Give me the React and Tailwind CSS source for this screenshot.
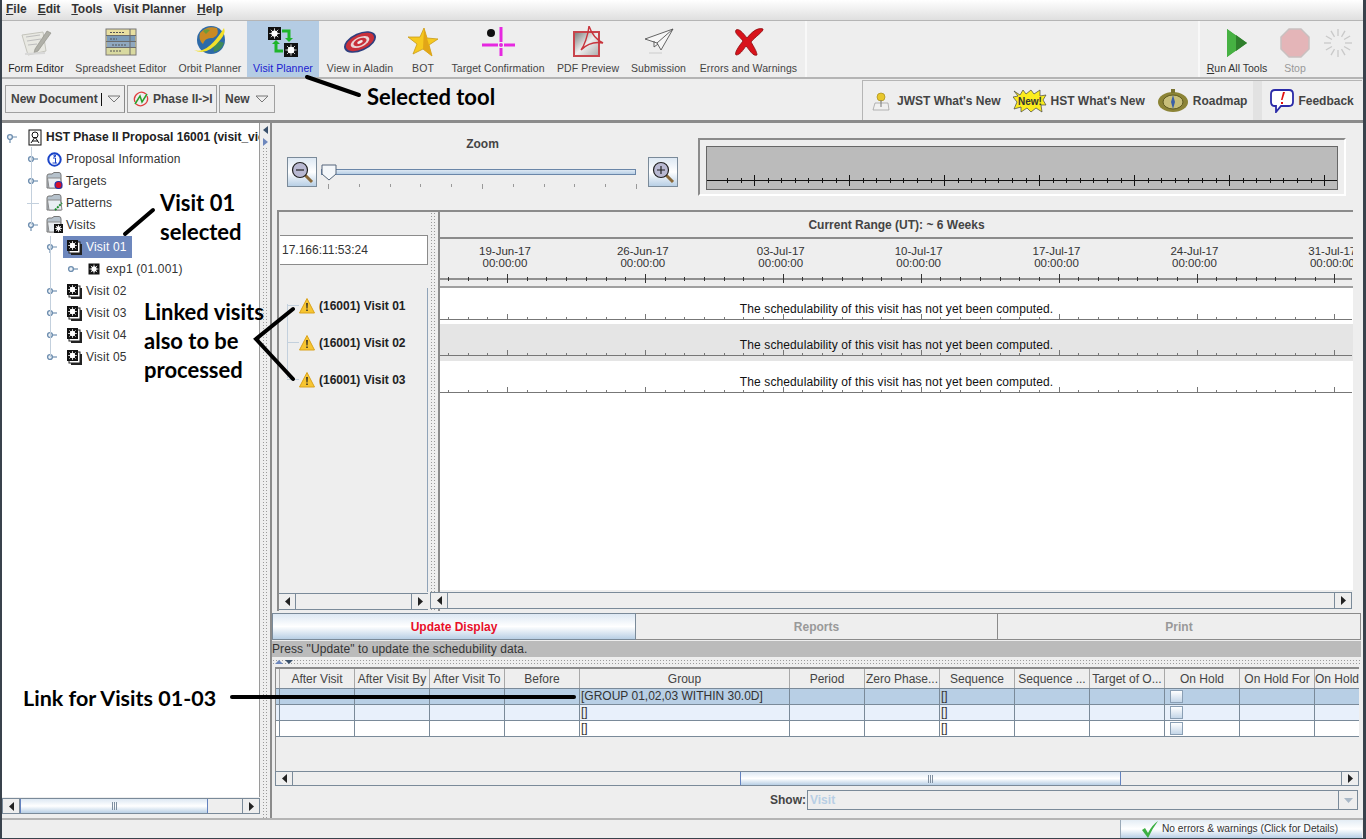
import React from 'react';

const range = (n) => Array.from({ length: n }, (_, i) => i);

// ---- icons, drawn small like the Java toolbar bitmaps ----
const FormEditorIcon = () => (
  <svg width="34" height="30" viewBox="0 0 34 30">
    <path d="M3 8 L24 5 L27 24 L9 28 Z" fill="#e8e8e2" stroke="#c4c4bc" />
    <path d="M7 10 L21 8 M8 14 L22 12 M9 18 L18 17" stroke="#bdbdbd" />
    <path d="M28 4 L32 6 L19 24 L15 26 L16 22 Z" fill="#b0b0a8" stroke="#8a8a82" strokeWidth="0.6" />
    <path d="M6 27 L26 26" stroke="#d8d8d8" strokeWidth="2" />
  </svg>
);
const SheetIcon = () => (
  <svg width="32" height="28" viewBox="0 0 32 28">
    <rect x="1" y="1" width="30" height="26" fill="#e8dfa0" stroke="#777" />
    <rect x="2" y="8" width="28" height="6" fill="#7c9cb8" />
    <rect x="2" y="20" width="28" height="6" fill="#d8d9a0" />
    <rect x="2" y="14" width="28" height="6" fill="#8fa8c0" />
    <path d="M1 7.5 H31 M1 13.5 H31 M1 19.5 H31 M25 1 V27" stroke="#6b6b6b" />
    <path d="M5 4.5 H20 M5 11 H12 M7 17 H22 M5 23 H17" stroke="#555" strokeDasharray="2 1" />
  </svg>
);
const OrbitIcon = () => (
  <svg width="34" height="34" viewBox="0 0 34 34">
    <circle cx="18" cy="15" r="14" fill="#2d6aa8" />
    <path d="M7 8 Q14 0 24 3 Q27 10 20 13 Q12 12 10 19 Q5 15 7 8 Z" fill="#c98a24" />
    <path d="M20 18 Q27 15 31 18 Q28 26 21 27 Z" fill="#3f8a5a" />
    <path d="M10 6 Q13 3 17 5 L13 9 Z" fill="#6c9a3a" />
    <path d="M1 25 Q14 30 31 3 Q33 8 28 14 Q14 32 1 25 Z" fill="#f3e02a" />
  </svg>
);
// black tile with a white burst, the visit / exposure mark
const Square = ({ x, y, s = 11 }) => {
  const cx = x + s / 2;
  const cy = y + s / 2;
  const r = s * 0.4;
  const d = r * 0.72;
  return (
    <g>
      <rect x={x} y={y} width={s} height={s} fill="#111" />
      <circle cx={cx} cy={cy} r={s * 0.24} fill="#fff" />
      <path
        d={`M${cx} ${cy - r} V${cy + r} M${cx - r} ${cy} H${cx + r} M${cx - d} ${cy - d} L${cx + d} ${cy + d} M${cx - d} ${cy + d} L${cx + d} ${cy - d}`}
        stroke="#fff"
        strokeWidth="0.8"
      />
    </g>
  );
};
const VisitPlannerIcon = () => (
  <svg width="32" height="32" viewBox="0 0 32 32">
    <Square x={1} y={1} s={13} />
    <Square x={17} y={17} s={14} />
    <path d="M15 5 H22 V13" fill="none" stroke="#1fb52b" strokeWidth="3" />
    <path d="M18 12 H26 L22 16 Z" fill="#1fb52b" />
    <path d="M16 25 H9 V17" fill="none" stroke="#1fb52b" strokeWidth="3" />
    <path d="M5 18 H13 L9 14 Z" fill="#1fb52b" />
  </svg>
);
const AladinIcon = () => (
  <svg width="34" height="26" viewBox="0 0 34 26">
    <g transform="rotate(-24 17 13)">
      <ellipse cx="17" cy="13" rx="17" ry="9" fill="#2f3f7f" />
      <ellipse cx="17" cy="13" rx="15" ry="7.5" fill="#c9303a" />
      <ellipse cx="17" cy="13" rx="10" ry="5" fill="#e9d6d6" />
      <ellipse cx="17" cy="13" rx="7" ry="3.5" fill="#c9303a" />
      <ellipse cx="17" cy="13" rx="3" ry="1.5" fill="#eee" />
    </g>
  </svg>
);
const StarIcon = () => (
  <svg width="32" height="30" viewBox="0 0 32 30">
    <path d="M17 1 L20 11 L31 12 L22 18 L25 29 L16 22 L6 27 L10 17 L1 10 L13 10 Z" fill="#f6c91f" stroke="#c99a18" strokeWidth="0.8" />
    <path d="M17 1 L16 22 L25 29 L22 18 Z" fill="#e2a617" />
  </svg>
);
const TargetIcon = () => (
  <svg width="33" height="30" viewBox="0 0 33 30">
    <circle cx="9" cy="6" r="4" fill="#111" />
    <path d="M19 0 V15 M19 21 V29 M0 18 H16 M22 18 H33" stroke="#e628e0" strokeWidth="3" />
    <circle cx="19" cy="18" r="2" fill="#e628e0" />
  </svg>
);
const PdfIcon = () => (
  <svg width="32" height="32" viewBox="0 0 32 32">
    <defs>
      <linearGradient id="pdfg" x1="0" y1="0" x2="1" y2="1">
        <stop offset="0" stopColor="#777" />
        <stop offset="0.5" stopColor="#eee" />
        <stop offset="1" stopColor="#aaa" />
      </linearGradient>
    </defs>
    <rect x="2" y="6" width="25" height="24" fill="url(#pdfg)" stroke="#c8444c" strokeWidth="2" />
    <path d="M17 0 C16 10 12 20 9 24 C13 20 20 15 31 17 C25 14 20 9 17 0 Z" fill="none" stroke="#c8343c" strokeWidth="1.4" />
  </svg>
);
const PlaneIcon = () => (
  <svg width="30" height="28" viewBox="0 0 30 28">
    <path d="M1 11 L29 1 L17 22 L13 15 Z M13 15 L29 1 M10 13 L10 19 L14 16" fill="#f6f6f6" stroke="#555" strokeWidth="0.9" />
    <path d="M5 25 H18" stroke="#ddd" strokeWidth="2" />
  </svg>
);
const RedXIcon = () => (
  <svg width="32" height="30" viewBox="0 0 32 30">
    <path d="M3 3 C6 1 10 6 14 11 C18 6 24 0 30 2 C31 4 22 10 18 15 C21 20 24 25 24 28 C20 30 16 22 13 19 C10 23 7 28 3 28 C1 26 6 19 10 14 C6 9 1 6 3 3 Z" fill="#d8131b" stroke="#8a0c10" strokeWidth="0.8" />
  </svg>
);
const RunIcon = () => (
  <svg width="22" height="30" viewBox="0 0 22 30">
    <path d="M1 1 L21 15 L1 29 Z" fill="#3ea33a" />
    <path d="M10 7 L21 15 L10 23 Z" fill="#2f7f2c" />
    <path d="M1 1 L10 8 L10 22 L1 29 Z" fill="#46b142" />
  </svg>
);
const StopIcon = () => (
  <svg width="30" height="30" viewBox="0 0 30 30">
    <path d="M9 1 H21 L29 9 V21 L21 29 H9 L1 21 V9 Z" fill="#e4b5b8" stroke="#c9c0c0" strokeWidth="1.5" />
  </svg>
);
const Spinner = () => (
  <svg width="32" height="32" viewBox="0 0 32 32">
    {range(12).map((i) => (
      <line key={i} x1="16" y1="2" x2="16" y2="9" stroke="#c9c9c9" strokeWidth="1.3" transform={`rotate(${i * 30} 16 16)`} />
    ))}
  </svg>
);
const FlagIcon = () => (
  <svg width="18" height="20" viewBox="0 0 18 20">
    <path d="M1 19 L3 12 H16 L17 19 Z" fill="#f0f0f0" stroke="#999" strokeWidth="0.7" />
    <circle cx="9" cy="6" r="4" fill="#e8c72c" stroke="#a68c1c" strokeWidth="0.7" />
    <path d="M9 9 V16" stroke="#777" />
  </svg>
);
const NewBurst = () => (
  <svg width="34" height="24" viewBox="0 0 34 24">
    <path d="M1 2 L7 6 L10 1 L13 5 L18 1 L21 5 L27 1 L27 7 L33 6 L30 11 L33 16 L28 16 L29 23 L23 19 L18 23 L14 19 L8 23 L8 18 L1 20 L4 13 L0 8 L5 7 Z" fill="#fbec1e" stroke="#444" strokeWidth="0.7" />
    <text x="17" y="15.5" textAnchor="middle" fontSize="10" fontFamily="Liberation Sans, sans-serif" fill="#333">New!</text>
  </svg>
);
const CompassIcon = () => (
  <svg width="30" height="24" viewBox="0 0 30 24">
    <ellipse cx="15" cy="13" rx="15" ry="10" fill="#8c8436" />
    <ellipse cx="15" cy="13" rx="10" ry="7" fill="#c8bf7a" stroke="#5f5a20" />
    <rect x="13" y="0" width="4" height="4" fill="#7b7430" />
    <path d="M15 6 L17 13 L15 20 L13 13 Z" fill="#3a5fa8" />
  </svg>
);
const FeedbackIcon = () => (
  <svg width="24" height="24" viewBox="0 0 24 24">
    <path d="M5 1 H19 Q23 1 23 5 V13 Q23 17 19 17 H11 L6 23 V17 H5 Q1 17 1 13 V5 Q1 1 5 1 Z" fill="#fff" stroke="#2a2aa8" strokeWidth="1.8" />
    <path d="M13 3 L15 3 L12.5 11 L11 11 Z M11 13 H13 V15 H11 Z" fill="#e01010" />
  </svg>
);
const VisitIcon = () => (
  <svg width="17" height="17" viewBox="0 0 17 17">
    <rect x="5" y="5" width="11" height="11" fill="#222" />
    <rect x="3" y="3" width="11" height="11" fill="#fff" stroke="#222" />
    <Square x={1} y={1} s={11} />
  </svg>
);
const ExpIcon = () => (
  <svg width="12" height="12" viewBox="0 0 12 12">
    <Square x={0.5} y={0.5} s={11} />
  </svg>
);
const RootIcon = () => (
  <svg width="14" height="17" viewBox="0 0 14 17">
    <rect x="1" y="1" width="12" height="15" fill="#fff" stroke="#111" />
    <circle cx="7" cy="6" r="3" fill="none" stroke="#111" />
    <path d="M3 14 L7 8 L11 14 M4 12 H10" stroke="#111" fill="none" />
  </svg>
);
const InfoIcon = () => (
  <svg width="18" height="15" viewBox="0 0 18 15">
    <circle cx="8.5" cy="7.5" r="6.2" fill="#fff" stroke="#1a44c8" strokeWidth="2" />
    <path d="M7 6 H9.5 V11 H11 M6.5 11 H10 M8 3 H9.5 V4.5 H8 Z" stroke="#1a44c8" fill="none" />
  </svg>
);
const FolderIcon = ({ badge }) => (
  <svg width="18" height="18" viewBox="0 0 18 18">
    <path d="M1 16 V4 Q1 2 3 2 H6 L8 0.5 H13 Q15 0.5 15 3 V16 Z" fill="#b6c2cc" stroke="#777" />
    <path d="M3 16 L1.5 6 H14.5 L16 16 Z" fill="#e9eef2" stroke="#8a8a8a" />
    {badge === 'target' && <circle cx="12.5" cy="13" r="3.5" fill="#d8102a" stroke="#2030a8" strokeWidth="1.2" />}
    {badge === 'pattern' && <path d="M9 16 L16 9" stroke="#1c8a2c" strokeWidth="2" strokeDasharray="2 1" />}
    {badge === 'visit' && <Square x={8} y={8} s={9} />}
  </svg>
);
const WarnIcon = () => (
  <svg width="16" height="16" viewBox="0 0 16 16">
    <path d="M8 0.5 L15.5 15 H0.5 Z" fill="#f7c531" stroke="#d9a21c" strokeLinejoin="round" />
    <path d="M7.2 5 H8.8 L8.5 10.5 H7.5 Z M7.3 11.5 H8.7 V13 H7.3 Z" fill="#222" />
  </svg>
);
const Magnifier = ({ plus }) => (
  <svg width="24" height="24" viewBox="0 0 24 24">
    <path d="M15 15 L22 22" stroke="#8a6a3a" strokeWidth="3" />
    <circle cx="10" cy="10" r="7.5" fill="#b9b9d2" stroke="#222" strokeWidth="1.2" />
    <path d={plus ? 'M6 10 H14 M10 6 V14' : 'M6 10 H14'} stroke="#222" strokeWidth="1.2" />
  </svg>
);
const CheckIcon = () => (
  <svg width="18" height="18" viewBox="0 0 18 18">
    <path d="M1 10 L4 8 L7 13 Q11 5 17 1 Q11 9 7 18 Z" fill="#3cb043" />
  </svg>
);
const CycleIcon = () => (
  <svg width="16" height="16" viewBox="0 0 16 16">
    <path d="M2 11 A7 7 0 0 1 13 3" fill="none" stroke="#e04040" strokeWidth="1.3" />
    <path d="M14 5 A7 7 0 0 1 3 13" fill="none" stroke="#e04040" strokeWidth="1.3" />
    <path d="M2 13 L7 5 L9 11 L14 3" fill="none" stroke="#2aa02a" strokeWidth="1.5" />
  </svg>
);
const DownTri = ({ color = '#777' }) => (
  <svg width="14" height="8" viewBox="0 0 14 8">
    <path d="M1 1 H13 L7 7 Z" fill="none" stroke={color} />
  </svg>
);

// ---- swing bits ----
const ArrowBtn = ({ dir, className = 'w-[16px]' }) => (
  <div className={`${className} shrink-0 h-full flex items-center justify-center bg-[#eeeeee]`}>
    <svg width="5" height="9" viewBox="0 0 5 9">
      <path d={dir === 'left' ? 'M5 0 V9 L0 4.5 Z' : 'M0 0 V9 L5 4.5 Z'} fill="#222" />
    </svg>
  </div>
);

const Grip = () => (
  <div className="flex gap-[1px] h-[8px]">
    <div className="w-px bg-[#7f8fa0]" />
    <div className="w-px bg-[#7f8fa0]" />
    <div className="w-px bg-[#7f8fa0]" />
  </div>
);

// thumb = [before, width], null when the bar is empty
const HScroll = ({ thumb, className = '' }) => (
  <div className={`flex items-stretch border border-[#7a8a99] bg-[#eeeeee] ${className}`}>
    <ArrowBtn dir="left" />
    <div className="flex-1 flex border-x border-[#7a8a99] min-w-0">
      {thumb && <div style={{ width: thumb[0] }} className="shrink-0" />}
      {thumb && (
        <div style={{ width: thumb[1] }} className="shrink-0 border-x border-[#6382bf] bg-linear-to-b from-[#dde8f3] via-white to-[#b8cfe5] flex items-center justify-center">
          <Grip />
        </div>
      )}
    </div>
    <ArrowBtn dir="right" />
  </div>
);

const Handle = ({ open }) => (
  <svg width="12" height="12" viewBox="0 0 12 12" className="shrink-0">
    <circle cx="4" cy="6" r="2.4" fill="#eef3f8" stroke="#6f8fb0" strokeWidth="1.4" />
    <path d={open ? 'M4 8.5 V12 M6.5 6 H11' : 'M6.5 6 H11'} stroke="#6f8fb0" strokeWidth="1.2" />
  </svg>
);

const TreeRow = ({ pad, icon, label, bold, selected, noHandle, open, inner = 'ml-[7px] gap-[2px]' }) => (
  <div className={`h-[22px] flex items-center ${pad}`}>
    <div className="w-[12px] shrink-0 flex items-center">
      {noHandle ? <div className="w-[12px] h-px bg-[#c3d0dd]" /> : <Handle open={open} />}
    </div>
    {selected ? (
      <div className="ml-[5px] h-[22px] w-[69px] flex items-center gap-[3px] bg-[#6d87bd] pl-[3px]">
        {icon}
        <span className="text-white">{label}</span>
      </div>
    ) : (
      <div className={`flex items-center ${inner} whitespace-nowrap`}>
        {icon}
        <span className={bold ? 'font-bold text-[#222] tracking-normal' : ''}>{label}</span>
      </div>
    )}
  </div>
);

const tools = [
  { w: 'w-[66px]', icon: <FormEditorIcon />, label: 'Form Editor', dark: true },
  { w: 'w-[104px]', icon: <SheetIcon />, label: 'Spreadsheet Editor' },
  { w: 'w-[74px]', icon: <OrbitIcon />, label: 'Orbit Planner' },
  { w: 'w-[72px]', icon: <VisitPlannerIcon />, label: 'Visit Planner', active: true },
  { w: 'w-[82px]', icon: <AladinIcon />, label: 'View in Aladin' },
  { w: 'w-[44px]', icon: <StarIcon />, label: 'BOT' },
  { w: 'w-[106px]', icon: <TargetIcon />, label: 'Target Confirmation' },
  { w: 'w-[74px]', icon: <PdfIcon />, label: 'PDF Preview' },
  { w: 'w-[67px]', icon: <PlaneIcon />, label: 'Submission' },
  { w: 'w-[113px]', icon: <RedXIcon />, label: 'Errors and Warnings' },
];

const ToolButton = ({ w, icon, label, active, dark }) => (
  <div className={`${w} shrink-0 flex flex-col items-center ${active ? 'bg-[#b4cce4] text-[#1a1ad0]' : dark ? 'text-[#222]' : 'text-[#444]'}`}>
    <div className="h-[40px] pt-[2px] flex items-center justify-center">{icon}</div>
    <div className="text-[10.5px] tracking-[0.08px] leading-[13px] mt-[1px] whitespace-nowrap">{label}</div>
  </div>
);

const dates = ['19-Jun-17', '26-Jun-17', '03-Jul-17', '10-Jul-17', '17-Jul-17', '24-Jul-17', '31-Jul-17'];

// ticks of the time axis, 7 per week, first major at x=67 of the strip
const AxisTicks = ({ height, y, long = 5, short = 2, line = '#333' }) => (
  <svg width="912" height={height} className="block">
    <line x1="0" y1={y} x2="912" y2={y} stroke={line} />
    {range(48).map((i) => {
      const x = Math.round(7.9 + i * 19.7) + 0.5;
      const major = (i - 3) % 7 === 0;
      return <line key={i} x1={x} x2={x} y1={y - (major ? long : short)} y2={major ? y + long - 1 : y + short} stroke={line} />;
    })}
  </svg>
);

const ScheduleRow = ({ shaded, height }) => (
  <div className={`${height} ${shaded ? 'bg-[#e5e5e5]' : 'bg-white'}`}>
    <div className="pt-[15px] h-[26px] text-center text-[12px] tracking-[0.11px] leading-[12px] text-[#111] whitespace-nowrap">
      The schedulability of this visit has not yet been computed.
    </div>
    <svg width="912" height="6" className="block">
      <line x1="0" y1="5.5" x2="912" y2="5.5" stroke="#777" />
      {range(48).map((i) => {
        const x = Math.round(7.9 + i * 19.7) + 0.5;
        const major = (i - 3) % 7 === 0;
        return <line key={i} x1={x} x2={x} y1={major ? 0 : 3} y2="5" stroke="#777" />;
      })}
    </svg>
  </div>
);

const columns = ['', 'After Visit', 'After Visit By', 'After Visit To', 'Before', 'Group', 'Period', 'Zero Phase...', 'Sequence', 'Sequence ...', 'Target of O...', 'On Hold', 'On Hold For', 'On Hold'];
const gridCols = 'grid grid-cols-[4px_75px_75px_75px_75px_210px_75px_75px_75px_75px_75px_75px_75px_44px]';

const TableRow = ({ group, bg }) => (
  <div className={`${gridCols} h-[16px] border-b border-[#7a8a99] ${bg} text-[12px] leading-[15px] text-[#333]`}>
    {columns.map((c, i) => (
      <div key={i} className="border-r border-[#7a8a99] overflow-hidden whitespace-nowrap pl-[1px] last:border-r-0 flex items-center">
        {i === 5 && group}
        {i === 8 && '[]'}
        {i === 11 && <div className="ml-[4px] w-[13px] h-[13px] border border-[#8a9fb4] bg-linear-to-b from-white to-[#c4d6e8]" />}
      </div>
    ))}
  </div>
);

const Dots = ({ className }) => (
  <div className={`bg-[radial-gradient(#9a9a9a_0.6px,transparent_0.7px)] bg-size-[3px_3px] ${className}`} />
);

export default function App() {
  return (
    <div className="relative w-[1366px] h-[839px] overflow-hidden bg-[#eeeeee] text-[#333] font-['Liberation_Sans',Arial,sans-serif] border-l-2 border-r-[3px] border-b border-[#39424c]">
      {/* menu */}
      <div className="h-[21px] flex items-center gap-[11px] pl-[4px] pb-[2px] text-[12px] font-bold text-[#333] bg-linear-to-b from-white to-[#dfdfdf] border-b border-[#b5b5b5]">
        <span><u>F</u>ile</span>
        <span><u>E</u>dit</span>
        <span><u>T</u>ools</span>
        <span>Visit Planner</span>
        <span><u>H</u>elp</span>
      </div>

      {/* tool bar */}
      <div className="h-[58px] flex justify-between border-b-2 border-[#b4b4b4]">
        <div className="flex pl-[1px] border-r-2 border-[#f8f8f8]">
          {tools.map((t) => (
            <ToolButton key={t.label} {...t} />
          ))}
        </div>
        <div className="flex w-[165px] border-l-2 border-[#f8f8f8] text-[10.5px]">
          <div className="w-[74px] flex flex-col items-center text-[#333]">
            <div className="h-[40px] flex items-center pt-[3px]"><RunIcon /></div>
            <span className="mt-[1px] leading-[13px]"><u>R</u>un All Tools</span>
          </div>
          <div className="w-[42px] flex flex-col items-center text-[#999]">
            <div className="h-[40px] flex items-center pt-[3px]"><StopIcon /></div>
            <span className="mt-[1px] leading-[13px]">Stop</span>
          </div>
          <div className="w-[44px] h-[40px] flex items-center justify-center pt-[3px]"><Spinner /></div>
        </div>
      </div>

      {/* second bar */}
      <div className="h-[44px] flex justify-between items-start border-b-[3px] border-[#8b8b8b] pr-[1px]">
        <div className="flex gap-[2px] pl-[3px] pt-[6px] text-[12px] font-bold text-[#444]">
          <div className="w-[120px] h-[28px] border border-[#a0a0a0] border-r-[#8a8a8a] flex items-center pl-[5px]">
            <span className="whitespace-nowrap">New Document</span>
            <div className="ml-[3px] w-px h-[13px] bg-[#111]" />
            <div className="ml-[5px]"><DownTri /></div>
          </div>
          <div className="w-[90px] h-[28px] border border-[#a0a0a0] flex items-center pl-[5px] gap-[4px]">
            <CycleIcon />
            <span className="whitespace-nowrap">Phase II-&gt;I</span>
          </div>
          <div className="w-[56px] h-[28px] border border-[#a0a0a0] flex items-center pl-[5px] gap-[5px]">
            <span>New</span>
            <DownTri />
          </div>
        </div>
        <div className="w-[500px] h-[40px] mt-[1px] border-l border-t border-[#b5b5b5] flex items-center text-[12px] font-bold text-[#444] whitespace-nowrap">
          <div className="ml-[9px]"><FlagIcon /></div>
          <span className="ml-[7px]">JWST What's New</span>
          <div className="ml-[12px]"><NewBurst /></div>
          <span className="ml-[4px]">HST What's New</span>
          <div className="ml-[13px]"><CompassIcon /></div>
          <span className="ml-[5px]">Roadmap</span>
          <div className="ml-[6px] w-[9px] h-full bg-[#e2e2e2]" />
          <div className="ml-[8px]"><FeedbackIcon /></div>
          <span className="ml-[4px]">Feedback</span>
        </div>
      </div>

      {/* main area */}
      <div className="h-[695px] flex">
        {/* tree */}
        <div className="w-[258px] shrink-0 flex flex-col">
          <div className="relative h-[674px] bg-white border-r border-[#9a9a9a] pt-[3px] text-[12px] tracking-[0.2px] text-[#333] overflow-hidden">
            <div className="absolute left-[29px] top-[24px] w-px h-[78px] bg-[#c3d0dd]" />
            <div className="absolute left-[48px] top-[113px] w-px h-[121px] bg-[#c3d0dd]" />
            <TreeRow pad="pl-[4px]" open inner="ml-[10px] gap-[4px]" bold icon={<RootIcon />} label="HST Phase II Proposal 16001 (visit_vicinity)" />
            <TreeRow pad="pl-[25px]" icon={<InfoIcon />} label="Proposal Information" />
            <TreeRow pad="pl-[25px]" icon={<FolderIcon badge="target" />} label="Targets" />
            <TreeRow pad="pl-[25px]" noHandle icon={<FolderIcon badge="pattern" />} label="Patterns" />
            <TreeRow pad="pl-[25px]" open icon={<FolderIcon badge="visit" />} label="Visits" />
            <TreeRow pad="pl-[44px]" open selected icon={<VisitIcon />} label="Visit 01" />
            <TreeRow pad="pl-[65px]" inner="ml-[9px] gap-[6px]" icon={<ExpIcon />} label="exp1 (01.001)" />
            <TreeRow pad="pl-[44px]" inner="ml-[8px] gap-[3px]" icon={<VisitIcon />} label="Visit 02" />
            <TreeRow pad="pl-[44px]" inner="ml-[8px] gap-[3px]" icon={<VisitIcon />} label="Visit 03" />
            <TreeRow pad="pl-[44px]" inner="ml-[8px] gap-[3px]" icon={<VisitIcon />} label="Visit 04" />
            <TreeRow pad="pl-[44px]" inner="ml-[8px] gap-[3px]" icon={<VisitIcon />} label="Visit 05" />
          </div>
          <HScroll thumb={[0, 188]} className="h-[16px] mt-px" />
        </div>

        {/* vertical splitter */}
        <div className="w-[12px] shrink-0 flex flex-col items-center border-r-2 border-[#8b8b8b]">
          <svg width="8" height="22" viewBox="0 0 8 22" className="mt-[2px] shrink-0">
            <path d="M7 1 V9 L2 5 Z" fill="#39506b" />
            <path d="M2 13 V21 L7 17 Z" fill="#6d87bd" />
          </svg>
          <Dots className="w-[6px] flex-1" />
        </div>

        {/* right side */}
        <div className="w-[1090px] shrink-0 flex flex-col">
          {/* zoom */}
          <div className="h-[87px] flex pl-[15px]">
            <div className="w-[391px]">
              <div className="text-center text-[12px] font-bold leading-[14px] pt-[14px] text-[#444] h-[28px]">Zoom</div>
              <div className="flex mt-[6px]">
                <div className="w-[30px] h-[30px] border border-[#7a8a99] bg-linear-to-b from-[#dde8f3] via-white to-[#b8cfe5] flex items-center justify-center">
                  <Magnifier />
                </div>
                <div className="w-[331px] h-[34px] pl-[4px] pr-[12px] pt-[12px]">
                  <div className="relative h-[6px] border border-[#6a86a8] bg-linear-to-b from-[#dde8f3] to-[#b8cfe5]">
                    <svg width="16" height="17" viewBox="0 0 16 17" className="absolute left-[-1px] top-[-6px]">
                      <path d="M1 1 H15 V10 L8 16 L1 10 Z" fill="#f4f7fa" stroke="#54657a" />
                    </svg>
                  </div>
                  <div className="flex justify-between ml-[7px] w-[309px] mt-[9px]">
                    {range(11).map((i) => (
                      <div key={i} className={`w-px bg-[#999] ${i % 5 === 0 ? 'h-[5px]' : 'h-[3px]'}`} />
                    ))}
                  </div>
                </div>
                <div className="w-[30px] h-[30px] border border-[#7a8a99] bg-linear-to-b from-[#dde8f3] via-white to-[#b8cfe5] flex items-center justify-center">
                  <Magnifier plus />
                </div>
              </div>
            </div>
            <div className="ml-[20px] mt-[15px] w-[648px] h-[58px] border-2 border-[#8b8b8b] border-r-white border-b-white p-[6px]">
              <div className="h-[44px] border border-[#666] bg-[#bbbbbb]">
                <svg width="630" height="42" className="block">
                  <line x1="0" y1="33.5" x2="630" y2="33.5" stroke="#111" />
                  {range(47).map((i) => {
                    const x = Math.round(20 + i * 13.57) + 0.5;
                    const major = (i - 2) % 7 === 0;
                    return <line key={i} x1={x} x2={x} y1={major ? 28 : 31} y2={major ? 39 : 36} stroke="#111" />;
                  })}
                </svg>
              </div>
            </div>
          </div>

          {/* timeline panel */}
          <div className="h-[401px] ml-[5px] w-[1076px] flex border-t-2 border-l-2 border-[#8b8b8b]">
            <div className="w-[149px] shrink-0 flex flex-col">
              <div className="h-[23px] shrink-0" />
              <div className="h-[30px] ml-px shrink-0 bg-white border border-[#8b8b8b] border-l-0 flex items-center pl-[2px] text-[12px] text-[#333]">17.166:11:53:24</div>
              <div className="h-[23px] shrink-0" />
              <div className="relative flex-1 border-r border-[#8fa3b8]">
                <div className="absolute left-[8px] top-[16px] w-px h-[74px] bg-[#c3d0dd]" />
                {['Visit 01', 'Visit 02', 'Visit 03'].map((v) => (
                  <div key={v} className="h-[37px] -mt-px mb-px flex items-center pl-[8px] text-[12px] font-bold text-[#222] whitespace-nowrap">
                    <div className="w-[12px] h-px bg-[#c3d0dd]" />
                    <WarnIcon />
                    <span className="ml-[4px]">(16001) {v}</span>
                  </div>
                ))}
              </div>
              <HScroll thumb={null} className="h-[17px] mb-[1px] mt-[1px] border-x-0" />
            </div>
            <div className="w-[12px] shrink-0 flex justify-center border-r-2 border-[#8b8b8b]">
              <Dots className="w-[6px] h-full" />
            </div>
            <div className="w-[913px] shrink-0 flex flex-col">
              <div className="h-[27px] shrink-0 flex items-center justify-center text-[12px] font-bold text-[#444] border-b-2 border-[#8b8b8b]">
                Current Range (UT): ~ 6 Weeks
              </div>
              <div className="h-[47px] shrink-0 overflow-hidden text-[11.5px] leading-[12px] text-[#333]">
                <div className="flex -ml-[4px] pt-[6px] w-[966px] text-center">
                  {dates.map((d) => (
                    <div key={d} className="w-[137.9px] shrink-0">
                      <div>{d}</div>
                      <div>00:00:00</div>
                    </div>
                  ))}
                </div>
                <div className="mt-[2px]"><AxisTicks height={14} y={8} /></div>
              </div>
              <div className="h-[304px] shrink-0 bg-white border-t-2 border-[#a0a0a0] overflow-hidden">
                <ScheduleRow height="h-[36px]" />
                <ScheduleRow height="h-[37px]" shaded />
                <ScheduleRow height="h-[37px]" />
              </div>
              <HScroll thumb={null} className="relative h-[17px] mt-[2px] -ml-[10px] w-[922px]" />
            </div>
          </div>

          {/* tabs */}
          <div className="h-[27px] flex mt-[2px] text-[12px] font-bold">
            <div className="w-[364px] h-[27px] border border-[#7a8a99] bg-linear-to-b from-[#dde8f3] via-white to-[#b8cfe5] flex items-center justify-center text-[#e8102a]">Update Display</div>
            <div className="w-[362px] h-[27px] border border-[#8a8a8a] border-l-0 flex items-center justify-center text-[#999]">Reports</div>
            <div className="w-[363px] h-[27px] border border-[#8a8a8a] border-l-0 flex items-center justify-center text-[#999]">Print</div>
          </div>

          {/* message */}
          <div className="h-[16px] mt-[1px] w-[1089px] bg-[#bbbbbb] text-[12px] tracking-[0.1px] leading-[16px] text-[#333]">Press "Update" to update the schedubility data.</div>
          <div className="h-[10px] relative">
            <Dots className="h-[6px] mt-[2px]" />
            <svg width="20" height="6" viewBox="0 0 20 6" className="absolute left-[2px] top-[2px]">
              <path d="M1 5 H9 L5 1 Z" fill="#6d87bd" />
              <path d="M11 1 H19 L15 5 Z" fill="#39506b" />
            </svg>
          </div>

          {/* table */}
          <div className="ml-[3px] w-[1084px] border-t-2 border-l border-[#8b8b8b] overflow-hidden h-[104px] flex flex-col">
            <div className={`${gridCols} h-[20px] shrink-0 border-b border-[#7a8a99] text-[12px] text-[#444]`}>
              {columns.map((c, i) => (
                <div key={i} className="border-r border-[#a8a8a8] flex items-center justify-center overflow-hidden whitespace-nowrap last:justify-start last:border-r-0">
                  {c}
                </div>
              ))}
            </div>
            <TableRow bg="bg-[#b8cfe5]" group="[GROUP 01,02,03 WITHIN 30.0D]" />
            <TableRow bg="bg-[#e8f0fb]" group="[]" />
            <TableRow bg="bg-white" group="[]" />
          </div>
          <HScroll thumb={[447, 381]} className="h-[15px] ml-[3px] w-[1084px]" />

          {/* show */}
          <div className="h-[20px] mt-[4px] flex items-center justify-end pr-[4px] text-[12px]">
            <span className="font-bold text-[#444]">Show:</span>
            <div className="ml-px w-[551px] h-[20px] border border-[#7a8a99] flex items-center pl-[2px] text-[#b8cfe5] font-bold">
              <span className="flex-1">Visit</span>
              <div className="w-[19px] h-full border-l border-[#7a8a99] flex items-center justify-center">
                <svg width="9" height="5" viewBox="0 0 9 5"><path d="M0 0 H9 L4.5 5 Z" fill="#a9b8c7" /></svg>
              </div>
            </div>
          </div>
        </div>
      </div>

      {/* status bar */}
      <div className="h-[20px] border-t-2 border-[#b4b4b4] flex justify-end pr-[1px]">
        <div className="w-[242px] h-[18px] bg-linear-to-b from-[#e4edf5] via-white to-[#b8cfe5] border-l border-[#9aa9b8] flex items-center pl-[20px] text-[10.2px] text-[#333] whitespace-nowrap">
          <CheckIcon />
          <span className="ml-[3px]">No errors &amp; warnings (Click for Details)</span>
        </div>
      </div>

      {/* annotations pasted over the screenshot */}
      <svg width="1366" height="839" className="absolute left-[-2px] top-0 pointer-events-none">
        <g stroke="#000" strokeWidth="4" strokeLinecap="round" fill="none">
          <path d="M307 77 L359 95" />
          <path d="M125 234 L153 210" />
          <path d="M293 309 L256 339 L293 379" />
          <path d="M232 697 H574" />
        </g>
      </svg>
      <div className="absolute inset-0 left-[-2px] pointer-events-none font-['Lato',sans-serif] font-bold text-black text-[22px] leading-[29px]">
        <div className="absolute left-[367px] top-[82px] whitespace-nowrap">Selected tool</div>
        <div className="absolute left-[160px] top-[188px] whitespace-nowrap">Visit 01<br />selected</div>
        <div className="absolute left-[144px] top-[297px] whitespace-nowrap">Linked visits<br />also to be<br />processed</div>
        <div className="absolute left-[23px] top-[684px] whitespace-nowrap text-[21.5px]">Link for Visits 01-03</div>
      </div>
    </div>
  );
}
